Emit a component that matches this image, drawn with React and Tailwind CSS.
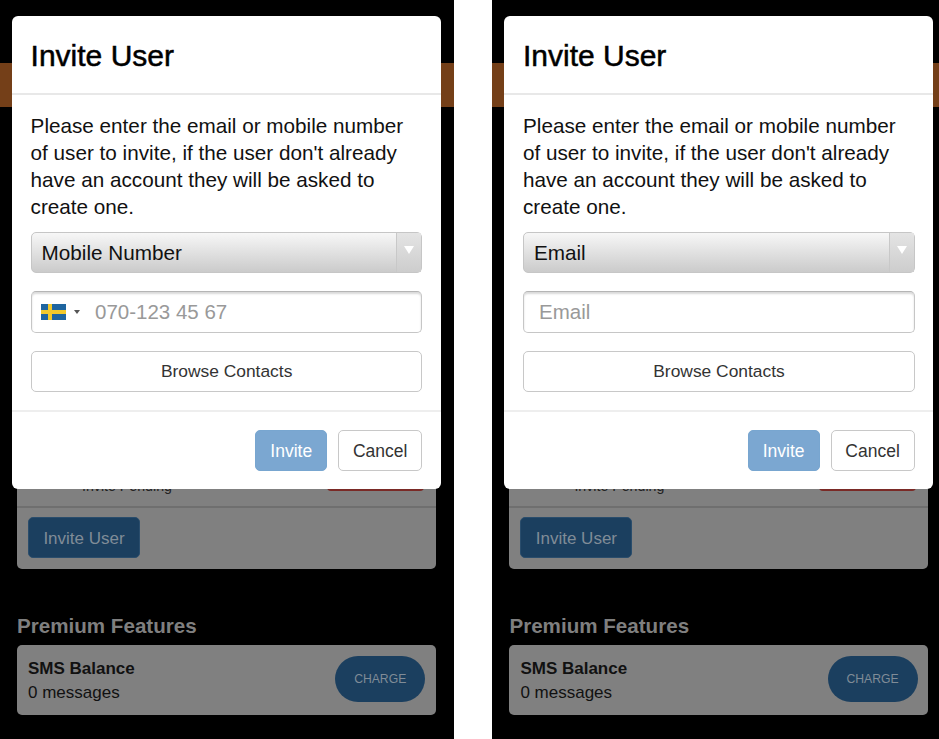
import React from "react";

const Flag = () => (
  <svg width="25" height="16" viewBox="0 0 25 16" className="shrink-0">
    <rect width="25" height="16" fill="#1f659f" />
    <rect x="7" width="4" height="16" fill="#f3c92b" />
    <rect y="6" width="25" height="4" fill="#f3c92b" />
  </svg>
);

const Modal = ({ type }) => {
  const isMobile = type === "mobile";

  return (
    <div className="absolute top-[16px] left-[12px] w-[429px] h-[473px] bg-white rounded-[6px] flex flex-col">
      <div className="h-[79px] shrink-0 border-b-2 border-[#e8e8e8] pl-[18.6px] pt-[20px]">
        <h2 className="text-[30px] leading-[40px] text-black [-webkit-text-stroke:0.5px_black]">Invite User</h2>
      </div>

      <div className="flex-1 pl-[19px] pr-[18.8px] pt-[17px]">
        <p className="-ml-[0.4px] text-[20.7px] leading-[27px] text-[#111]">
          Please enter the email or mobile number
          <br />
          of user to invite, if the user don't already
          <br />
          have an account they will be asked to
          <br />
          create one.
        </p>

        <div className="mt-[12px] h-[41px] flex rounded-[5px] border border-[#c6c6c6] bg-gradient-to-b from-[#f7f7f7] to-[#cbcbcb] text-[20.7px] text-[#111]">
          <div className="flex-1 pl-[9.6px] leading-[39px]">{isMobile ? "Mobile Number" : "Email"}</div>
          <div className="w-[25px] border-l border-[#c8c8c8] flex justify-center pt-[13px] bg-gradient-to-b from-[#e4e4e4] to-[#cdcdcd]">
            <div className="w-0 h-0 border-x-[5px] border-x-transparent border-t-[8px] border-t-white" />
          </div>
        </div>

        <div className="mt-[18px] h-[42px] flex items-center rounded-[5px] border border-[#c6c6c6] border-t-[#b5b5b5] shadow-[inset_0_2px_2px_rgba(0,0,0,0.15)] text-[20.5px] text-[#999]">
          {isMobile ? (
            <>
              <div className="pl-[9px]">
                <Flag />
              </div>
              <div className="ml-[8px] w-0 h-0 border-x-[3.5px] border-x-transparent border-t-[4px] border-t-[#555]" />
              <span className="ml-[15px]">070-123 45 67</span>
            </>
          ) : (
            <span className="pl-[14.6px]">Email</span>
          )}
        </div>

        <button className="mt-[18px] w-full h-[41px] rounded-[5px] border border-[#c8c8c8] text-[17.4px] text-[#333]">
          Browse Contacts
        </button>
      </div>

      <div className="h-[79px] shrink-0 border-t-2 border-[#eeeeee] flex justify-end gap-[11px] pr-[18.8px] pt-[18px]">
        <button className="w-[72px] h-[41px] pt-[2px] rounded-[5px] border border-[#78a6d0] bg-[#7ba7d1] text-[17.5px] text-white">
          Invite
        </button>
        <button className="w-[84px] h-[41px] pt-[2px] rounded-[5px] border border-[#c8c8c8] bg-white text-[17.5px] text-[#333]">
          Cancel
        </button>
      </div>
    </div>
  );
};

const Phone = ({ type }) => (
  <div className="relative w-[454px] h-[739px] shrink-0 bg-black overflow-hidden">
    <div className="h-[63px]" />
    <div className="h-[44px] bg-[#743f18]" />

    <div className="ml-[17px] w-[419px] h-[462px] bg-[#808080] rounded-b-[5px] flex flex-col justify-end">
      <div className="h-[21px] flex justify-between pl-[65px] pr-[12px] text-[#222]">
        <span className="text-[14.2px] leading-[16px] -mt-[7px]">Invite Pending</span>
        <div className="w-[97px] h-[6px] bg-[#7a2a26] rounded-b-[4px]" />
      </div>
      <div className="h-[63px] border-t-2 border-[#6f6f6f] pl-[11px] pt-[9px]">
        <button className="w-[112px] h-[41px] pt-[2px] rounded-[5px] bg-[#1b3f5f] border border-[#2a4d6c] text-[17px] text-[#808c97]">
          Invite User
        </button>
      </div>
    </div>

    <h3 className="mt-[43px] ml-[17px] text-[20.6px] leading-[28px] font-bold text-[#7f7f7f]">Premium Features</h3>

    <div className="mt-[5px] ml-[17px] w-[419px] h-[70px] bg-[#808080] rounded-[5px] flex items-center justify-between pl-[11px] pr-[10.8px]">
      <div className="text-[#111]">
        <div className="text-[17px] leading-[25px] font-bold">SMS Balance</div>
        <div className="text-[17px] leading-[23px]">0 messages</div>
      </div>
      <button className="w-[90px] h-[46px] mb-[2px] rounded-full bg-[#1b3f5f] text-[12.2px] text-[#808c97]">CHARGE</button>
    </div>

    <Modal type={type} />
  </div>
);

export default function App() {
  return (
    <div className="w-[939px] h-[739px] overflow-hidden bg-white flex gap-[38.4px] font-['Liberation_Sans',Arial,sans-serif]">
      <Phone type="mobile" />
      <Phone type="email" />
    </div>
  );
}
